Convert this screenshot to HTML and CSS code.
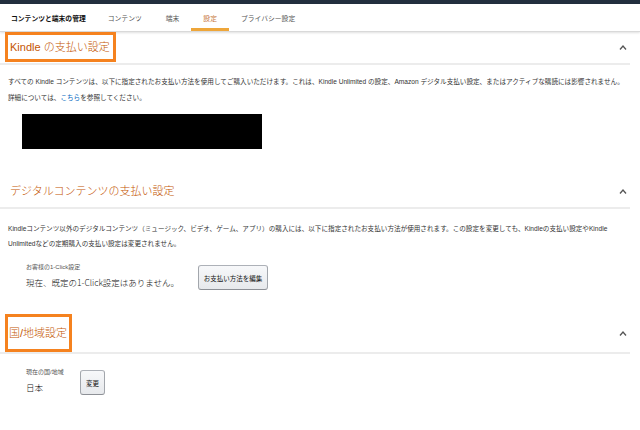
FILE: index.html
```html
<!DOCTYPE html>
<html lang="ja">
<head>
<meta charset="utf-8">
<title>コンテンツと端末の管理</title>
<link rel="stylesheet" href="styles.css">
</head>
<body>
<div class="topbar"></div>
<nav class="nav">
  <div class="nav-title">コンテンツと端末の管理</div>
  <div class="tab">コンテンツ</div>
  <div class="tab">端末</div>
  <div class="tab active">設定</div>
  <div class="tab">プライバシー設定</div>
</nav>
<main class="page">
  <section class="sec sec-first">
    <div class="sec-head">
      <h2 class="sec-title hl">Kindle の支払い設定</h2>
      <svg class="chev" width="8" height="5" viewBox="0 0 8 5"><polyline points="1,4.5 4,1 7,4.5" fill="none" stroke="#555" stroke-width="1.3"/></svg>
    </div>
    <p class="desc">すべての Kindle コンテンツは、以下に指定されたお支払い方法を使用してご購入いただけます。これは、Kindle Unlimited の設定、Amazon デジタル支払い設定、またはアクティブな購読には影響されません。<br>詳細については、<a class="link" href="#">こちら</a>を参照してください。</p>
    <div class="redacted"></div>
  </section>

  <section class="sec sec-digital">
    <div class="sec-head">
      <h2 class="sec-title">デジタルコンテンツの支払い設定</h2>
      <svg class="chev" width="8" height="5" viewBox="0 0 8 5"><polyline points="1,4.5 4,1 7,4.5" fill="none" stroke="#555" stroke-width="1.3"/></svg>
    </div>
    <p class="desc desc-tight">Kindleコンテンツ以外のデジタルコンテンツ（ミュージック、ビデオ、ゲーム、アプリ）の購入には、以下に指定されたお支払い方法が使用されます。この設定を変更しても、Kindleの支払い設定やKindle<br>Unlimitedなどの定期購入の支払い設定は変更されません。</p>
    <div class="row">
      <div class="field field-pay">
        <div class="label">お客様の1-Click設定</div>
        <div class="value">現在、既定の1-Click設定はありません。</div>
      </div>
      <button class="btn btn-wide">お支払い方法を編集</button>
    </div>
  </section>

  <section class="sec sec-region">
    <div class="sec-head sec-head-flat">
      <h2 class="sec-title hl tall">国/地域設定</h2>
      <svg class="chev" width="8" height="5" viewBox="0 0 8 5"><polyline points="1,4.5 4,1 7,4.5" fill="none" stroke="#555" stroke-width="1.3"/></svg>
    </div>
    <div class="row row-region">
      <div class="field field-region">
        <div class="label">現在の国/地域</div>
        <div class="value">日本</div>
      </div>
      <button class="btn btn-small">変更</button>
    </div>
  </section>
</main>
</body>
</html>
```
FILE: styles.css
```css
html, body {
  margin: 0;
  padding: 0;
  background: #fff;
}
body {
  font-family: "Liberation Sans", "Noto Sans CJK JP", sans-serif;
  color: #333;
}
.topbar {
  height: 4px;
  background: #232f3e;
}
.nav {
  height: 27px;
  display: flex;
  align-items: stretch;
  padding-left: 11px;
  border-bottom: 1px solid #d9d9d9;
  box-shadow: 0 1px 2px rgba(0, 0, 0, 0.12);
  font-size: 6.8px;
}
.nav-title {
  display: flex;
  align-items: center;
  font-weight: bold;
  color: #111;
  margin-right: 10px;
}
.tab {
  display: flex;
  align-items: center;
  padding: 3px 12px 0;
  color: #555;
  border-bottom: 3px solid transparent;
}
.tab.active {
  color: #c7773a;
  border-bottom-color: #eea63a;
}
.page {
  margin-right: 10px;
}
.sec-head {
  display: flex;
  justify-content: space-between;
  align-items: center;
  padding: 0 3px 1px 5px;
  border-bottom: 2px solid #ececec;
}
.sec-head-flat {
  padding-bottom: 0;
}
.sec-digital .sec-head {
  margin-top: 27px;
}
.sec-region .sec-head {
  margin-top: 24px;
}
.sec-title {
  margin: 0;
  font-size: 11px;
  font-weight: 300;
  line-height: 24px;
  color: #c45500;
  border: 3px solid transparent;
  padding: 0 3px 0 2px;
}
.sec-title.hl {
  border-color: #f5821f;
}
.sec-title.tall {
  line-height: 32px;
  padding: 0 2px 0 1px;
}
.chev {
  display: block;
}
.desc {
  margin: 9px 0 0 8px;
  font-size: 6.6px;
  line-height: 16px;
  color: #333;
}
.desc-tight {
  margin-top: 12px;
  line-height: 15px;
}
.link {
  color: #0066c0;
  text-decoration: none;
}
.redacted {
  margin: 8px 0 0 22px;
  width: 240px;
  height: 35px;
  background: #000;
}
.row {
  display: flex;
  align-items: flex-start;
  margin: 12px 0 0 26px;
}
.row-region {
  margin-top: 14px;
}
.field-pay {
  width: 172px;
}
.field-region {
  width: 54px;
}
.label {
  font-size: 6px;
  line-height: 9px;
  color: #555;
}
.value {
  margin-top: 4px;
  font-family: "Noto Sans CJK JP", sans-serif;
  font-size: 8.5px;
  font-weight: 300;
  line-height: 13px;
  color: #111;
}
.btn {
  margin-top: 2px;
  height: 25px;
  padding: 0;
  display: flex;
  align-items: center;
  justify-content: center;
  font-family: "Liberation Sans", "Noto Sans CJK JP", sans-serif;
  font-size: 6.5px;
  color: #111;
  background: linear-gradient(#f7f8fa, #e7e9ec);
  border: 1px solid #adb1b8;
  border-color: #adb1b8 #a2a6ac #8d9096;
  border-radius: 3px;
}
.btn-wide {
  width: 70px;
}
.btn-small {
  width: 25px;
}
```
